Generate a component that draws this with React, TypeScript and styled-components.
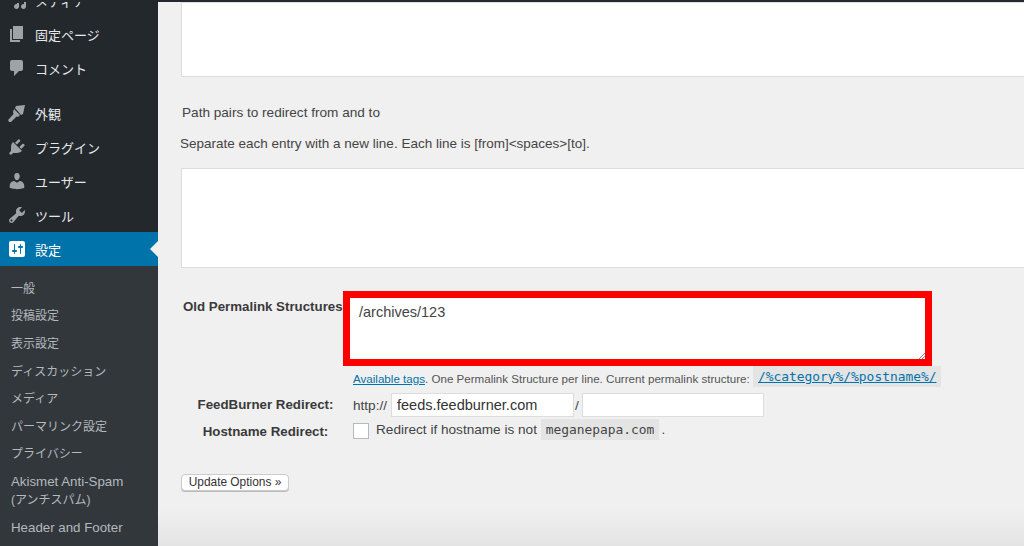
import React from "react";
import styled, { createGlobalStyle } from "styled-components";

const Global = createGlobalStyle`
  html, body { margin: 0; padding: 0; height: 546px; overflow: hidden; background: #f0f0f0; }
  #root { height: 546px; }
  * { box-sizing: border-box; }
`;
const Page = styled.div`
  display: flex; flex-direction: column; width: 1024px; height: 546px; overflow: hidden;
  font-family: "Liberation Sans", "Noto Sans CJK JP", sans-serif;
`;
const TopBar = styled.div`height: 2px; flex: none; background: #23282d;`;
const Body = styled.div`display: flex; flex: 1; min-height: 0;`;
const Sidebar = styled.nav`
  width: 158px; flex: none; background: #23282d; overflow: hidden;
  display: flex; flex-direction: column;
`;
const Row = styled.div<{ $active?: boolean }>`
  position: relative; flex: none; height: 34px; display: flex; align-items: center;
  padding-left: 7px; gap: 8px; font-size: 13px;
  color: ${p => (p.$active ? "#fff" : "#e6e7e8")};
  background: ${p => (p.$active ? "#0073aa" : "transparent")};
  &:first-child { margin-top: -19px; }
`;
const Caret = styled.span`
  position: absolute; right: 0; top: 9px; width: 0; height: 0;
  border: 8px solid transparent; border-right-color: #f0f0f0; border-left-width: 0;
`;
const IconBox = styled.svg<{ $light?: boolean }>`
  width: 20px; height: 20px; flex: none; fill: ${p => (p.$light ? "#fff" : "#9ea3a8")};
`;
const Spacer = styled.div`height: 11px; flex: none;`;
const SubMenu = styled.div`
  flex: 1; background: #32373c; padding-top: 9px; display: flex; flex-direction: column;
`;
const SubItem = styled.div`
  padding: 0 4px 0 11px; min-height: 27.6px; display: flex; align-items: center;
  font-size: 12px; line-height: 18px; color: #b4b9be;
`;
const SubItemTall = styled.div`
  padding: 5px 4px 5px 11px; font-size: 12px; line-height: 18px; color: #b4b9be;
`;
const Latin = styled.span`font-size: 13.3px; white-space: nowrap;`;
const Main = styled.main`
  flex: 1; min-width: 0; overflow: hidden; padding: 0 0 0 22px; color: #444; font-size: 13px;
  background: linear-gradient(#f0f0f0 506px, #e4e4e4 544px);
`;
const Panel = styled.div<{ $h: number }>`
  margin-left: 1px; width: 860px; height: ${p => p.$h}px; background: #fff; border: 1px solid #ddd;
`;
const PathNote = styled.p`margin: 28px 0 0 2px; font-size: 13.6px; line-height: 15px; color: #444;`;
const SepNote = styled.p`margin: 16px 0 17px; font-size: 13.5px; line-height: 15px; color: #444;`;
const Form = styled.div`
  margin-top: 23px; display: grid; grid-template-columns: 163px auto; justify-content: start;
`;
const Label = styled.div`
  font-size: 13.3px; font-weight: 700; color: #3a3a3a; text-align: center; white-space: nowrap;
`;
const PermLabel = styled(Label)`text-align: left; padding: 8px 0 0 3px;`;
const RedFrame = styled.div`
  width: 589px; height: 75px; border: 7px solid #fe0000;
  background: #fff; padding: 6px 0 0 9px; font-size: 14.5px; line-height: 17px; color: #444; position: relative;
`;
const Grip = styled.svg`position: absolute; right: 0; bottom: 0; width: 7px; height: 7px; stroke: #888; fill: none;`;
const HelpLine = styled.div`
  grid-column: 2; margin: 1px 0 0 10px; height: 22px; display: flex; align-items: center;
  font-size: 11.6px; white-space: pre; color: #555;
`;
const A = styled.a`color: #0073aa; text-decoration: underline;`;
const Code = styled.code`
  background: #e4e4e4; font-family: "DejaVu Sans Mono", monospace; font-size: 12.9px; color: #444;
  padding: 1px 5px; line-height: 19px; margin-right: 2px;
`;
const HelpCode = styled(Code)`margin-top: -4px;`;
const FeedLabel = styled(Label)`padding: 8px 0 0 8px; height: 29px;`;
const HostLabel = styled(Label)`padding: 6px 0 0 8px;`;
const Controls = styled.div`
  margin: 3px 0 0 10px; display: flex; align-items: center; font-size: 13.6px; color: #444; white-space: pre;
`;
const Input = styled.div<{ $w: number }>`
  width: ${p => p.$w}px; height: 24px; background: #fff; border: 1px solid #ddd;
  padding-left: 5px; font-size: 14.5px; line-height: 22px; color: #333;
`;
const HostInput = styled(Input)`margin-left: 4px;`;
const Slash = styled.span`margin: 0 3px 0 1px;`;
const Check = styled.span`
  width: 16px; height: 16px; background: #fff; border: 1px solid #b4b9be; margin: 2px 7px 0 0;
`;
const HostControls = styled(Controls)`margin-top: 0; height: 23px;`;
const Button = styled.button`
  display: block; margin-top: 33px; margin-left: 1px; width: 108px; height: 17px; padding: 0;
  background: #fff; border: 1px solid #ccc; border-radius: 4px; box-shadow: 0 1px 0 #bbb;
  font: 11.9px/15px "Liberation Sans", sans-serif; color: #333;
`;

const icons: Record<string, string> = {
  media: "M13 11V4c0-.55-.45-1-1-1h-1.670L9 1H5L3.670 3H2c-.55 0-1 .45-1 1v7c0 .55.45 1 1 1h10c.55 0 1-.45 1-1zM7 4.500c1.380 0 2.500 1.120 2.500 2.500S8.380 9.500 7 9.500 4.500 8.380 4.500 7 5.620 4.500 7 4.500zM14 6h5v10.500c0 1.380-1.120 2.500-2.500 2.500S14 17.880 14 16.500s1.120-2.500 2.500-2.500c.17 0 .34.020.5.050V9h-3V6zm-4 8.050V13h2v3.500c0 1.380-1.120 2.500-2.500 2.500S7 17.880 7 16.500 8.120 14 9.500 14c.17 0 .34.020.5.050z",
  page: "M6 15V2h10v13H6zm-1 1h8v2H3V5h2v11z",
  comment: "M5 2h9c1.100 0 2 .9 2 2v7c0 1.100-.9 2-2 2h-2l-5 5v-5H5c-1.100 0-2-.9-2-2V4c0-1.100.9-2 2-2z",
  brush: "M9 3l9-1-2 9-2 1-6-7zM7 6l6 6-2 2-1.500-.5L4.500 18.500c-.8.8-2 .8-2.700 0-.8-.7-.6-1.800.2-2.500l4.500-5L6 9z",
  plugin: "M13.110 4.360L9.870 7.600 8 5.730l3.240-3.240c.35-.34 1.050-.2 1.560.32.52.51.66 1.210.31 1.550zm-8 1.770l.91-1.120 9.010 9.010-1.190.84c-.71.710-2.630 1.160-3.820 1.160H6.140L4.900 17.260c-.59.590-1.540.590-2.120 0-.59-.58-.59-1.530 0-2.120l1.240-1.240v-3.880c0-1.130.4-3.050 1.090-3.890zm7.260 3.970l3.240-3.240c.34-.35 1.040-.21 1.550.31.52.51.66 1.210.31 1.550l-3.240 3.250z",
  user: "M10 9.250c-2.270 0-2.730-3.440-2.730-3.440C7 4.020 7.820 2 9.970 2c2.160 0 2.980 2.020 2.710 3.810 0 0-.41 3.440-2.680 3.440zm0 2.570L12.720 10c2.390 0 4.520 2.330 4.520 4.530v2.490s-3.650 1.130-7.240 1.130c-3.650 0-7.240-1.130-7.240-1.130v-2.490c0-2.250 1.940-4.530 4.430-4.530z",
  tool: "M16.680 9.770c-1.340 1.340-3.300 1.670-4.950.99l-5.410 6.520c-.99.990-2.590.990-3.570 0-.99-.98-.99-2.580 0-3.570l6.520-5.420c-.68-1.650-.35-3.610.99-4.950 1.280-1.280 3.120-1.620 4.720-1.060l-2.890 2.890 2.820 2.820 2.860-2.870c.53 1.580.18 3.400-1.090 4.670zM3.810 16.210c.4.390 1.040.39 1.430 0 .4-.4.400-1.040 0-1.430-.39-.4-1.030-.4-1.430 0-.39.39-.39 1.030 0 1.430z",
  settings: "M18 16V4c0-1.100-.9-2-2-2H4c-1.100 0-2 .9-2 2v12c0 1.100.9 2 2 2h12c1.100 0 2-.9 2-2zM8 11h1c.55 0 1 .45 1 1s-.45 1-1 1H8v1.500c0 .28-.22.5-.5.5s-.5-.22-.5-.5V13H6c-.55 0-1-.45-1-1s.45-1 1-1h1V5.500c0-.28.22-.5.5-.5s.5.220.5.5V11zm5-2h-1c-.55 0-1-.45-1-1s.45-1 1-1h1V5.500c0-.28.22-.5.5-.5s.5.220.5.5V7h1c.55 0 1 .45 1 1s-.45 1-1 1h-1v5.500c0 .28-.22.5-.5.5s-.5-.22-.5-.5V9z",
};

const Icon = ({ name, light }: { name: string; light?: boolean }) => (
  <IconBox viewBox="0 0 20 20" $light={light}><path d={icons[name]} /></IconBox>
);

export default function App() {
  return (
    <Page>
      <Global />
      <TopBar />
      <Body>
        <Sidebar>
          <Row><Icon name="media" />メディア</Row>
          <Row><Icon name="page" />固定ページ</Row>
          <Row><Icon name="comment" />コメント</Row>
          <Spacer />
          <Row><Icon name="brush" />外観</Row>
          <Row><Icon name="plugin" />プラグイン</Row>
          <Row><Icon name="user" />ユーザー</Row>
          <Row><Icon name="tool" />ツール</Row>
          <Row $active><Icon name="settings" light />設定<Caret /></Row>
          <SubMenu>
            <SubItem>一般</SubItem>
            <SubItem>投稿設定</SubItem>
            <SubItem>表示設定</SubItem>
            <SubItem>ディスカッション</SubItem>
            <SubItem>メディア</SubItem>
            <SubItem>パーマリンク設定</SubItem>
            <SubItem>プライバシー</SubItem>
            <SubItemTall><Latin>Akismet Anti-Spam</Latin><br />(アンチスパム)</SubItemTall>
            <SubItem><Latin>Header and Footer</Latin></SubItem>
          </SubMenu>
        </Sidebar>
        <Main>
          <Panel $h={75} />
          <PathNote>Path pairs to redirect from and to</PathNote>
          <SepNote>Separate each entry with a new line. Each line is [from]&lt;spaces&gt;[to].</SepNote>
          <Panel $h={100} />
          <Form>
            <PermLabel>Old Permalink Structures</PermLabel>
            <RedFrame>
              /archives/123
              <Grip viewBox="0 0 7 7"><path d="M1 7l6-6M4 7l3-3" /></Grip>
            </RedFrame>
            <HelpLine>
              <A>Available tags</A>. One Permalink Structure per line. Current permalink structure:{" "}
              <HelpCode><A>/%category%/%postname%/</A></HelpCode>
            </HelpLine>
            <FeedLabel>FeedBurner Redirect:</FeedLabel>
            <Controls>
              http://<HostInput $w={183}>feeds.feedburner.com</HostInput><Slash>/</Slash><Input $w={182} />
            </Controls>
            <HostLabel>Hostname Redirect:</HostLabel>
            <HostControls>
              <Check />Redirect if hostname is not <Code>meganepapa.com</Code>.
            </HostControls>
          </Form>
          <Button>Update Options »</Button>
        </Main>
      </Body>
    </Page>
  );
}
